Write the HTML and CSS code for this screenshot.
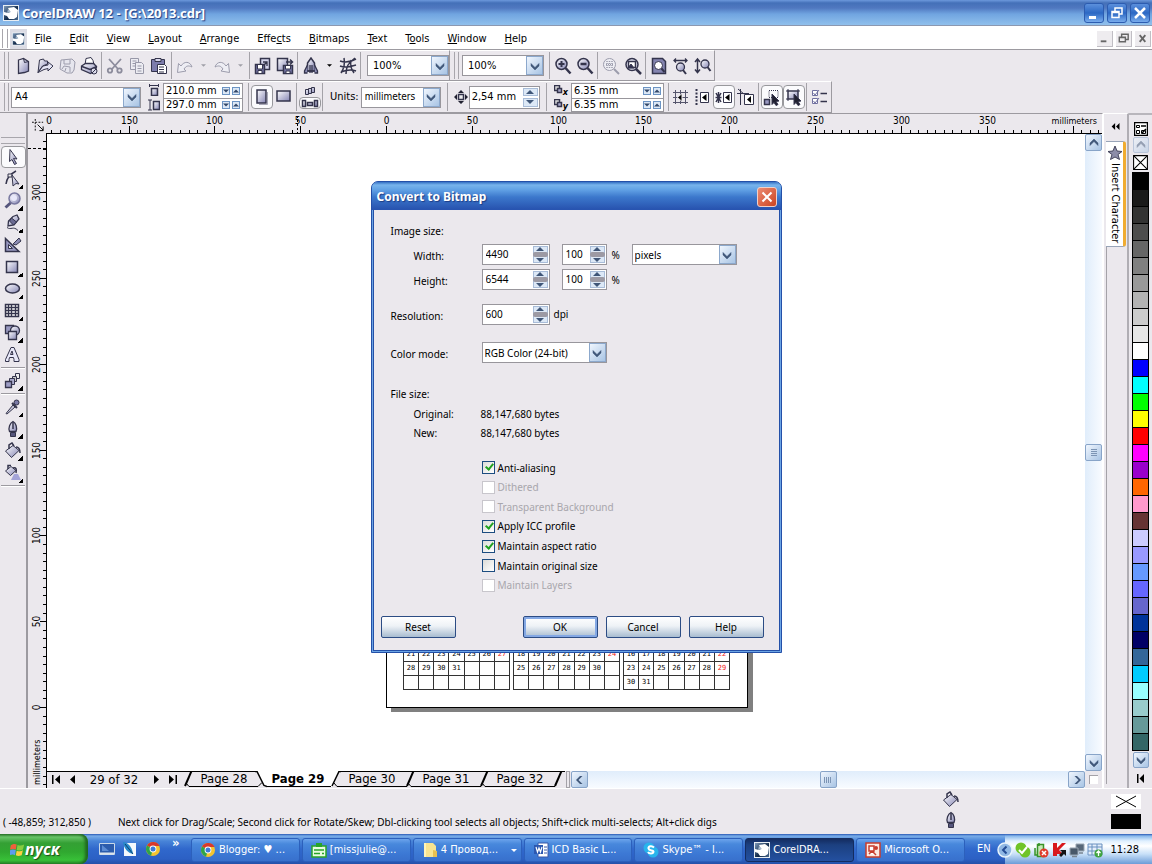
FILE: index.html
```
<!DOCTYPE html>
<html lang="en">
<head>
    <meta charset="UTF-8">
    <meta name="viewport" content="width=device-width, initial-scale=1.0">
    <title>CorelDRAW 12 - [G:\2013.cdr]</title>
    <link rel="stylesheet" href="styles.css">
</head>
<body>
    <!-- Icon sprite -->
    <svg class="sprite" aria-hidden="true">
        <defs>
            <linearGradient id="lav" x1="0" y1="0" x2="1" y2="1"><stop offset="0" stop-color="#fff"/><stop offset="1" stop-color="#8484b4"/></linearGradient>
            <linearGradient id="navy" x1="0" y1="0" x2="1" y2="1"><stop offset="0" stop-color="#7c98b8"/><stop offset="0.600" stop-color="#0c2444"/><stop offset="1" stop-color="#4c6c90"/></linearGradient>
        </defs>
        <symbol id="logo" viewBox="0 0 16 16"><path d="M0 0h16v16H0z" fill="#e8eef4"/><path d="M1 1h14v14H1z" fill="url(#navy)"/><path d="M5 3l6-1 4 3-1 7-3 2H6l-2-3-3-1V7l4 1 2-1z" fill="#fff"/><path d="M5 4l3 3-4 1z" fill="#a4b8cc"/></symbol>
        <symbol id="down" viewBox="0 0 10 10"><path d="M1 2.500l4 4 4-4v2.500L5 9 1 5z" fill="#3f5678" stroke="#3f5678" stroke-width=".5"/></symbol>
        <symbol id="up" viewBox="0 0 10 10"><path d="M1 7.500l4-4 4 4V5L5 1 1 5z" fill="#3f5678" stroke="#3f5678" stroke-width=".5"/></symbol>
        <symbol id="left" viewBox="0 0 10 10"><path d="M7.500 1l-4 4 4 4H5L1 5l4-4z" fill="#3f5678"/></symbol>
        <symbol id="right" viewBox="0 0 10 10"><path d="M2.500 1l4 4-4 4H5l4-4-4-4z" fill="#3f5678"/></symbol>
        <symbol id="tup" viewBox="0 0 8 4"><path d="M0 4l4-4 4 4z"/></symbol>
        <symbol id="tdown" viewBox="0 0 8 4"><path d="M0 0l4 4 4-4z"/></symbol>

        <symbol id="new" viewBox="0 0 18 18"><path d="M4.500 3l5-1.500 5 3V14l-4 1.500-6 1z" fill="url(#lav)" stroke-width="1.300"/><path d="M9.500 1.500l1 4 4-1" fill="none"/></symbol>
        <symbol id="open" viewBox="0 0 18 18"><path d="M2 15.500L3.500 3l4-1 1 2h3V7L6.500 9z" fill="url(#lav)"/><path d="M2 15.500L7 9l5-1V5l5 4-5 5v-2.500l-4 1z" fill="#e4e4f4"/></symbol>
        <symbol id="save" viewBox="0 0 18 18"><g stroke="#9c9cac"><path d="M3 3l11-1 3 3-1 8-2 3H9l-7-4z" fill="#e6e6ee"/><path d="M6 3v4h6V2.500M4 12l2-3 6 1v5M8 11l-1 3" fill="none"/></g></symbol>
        <symbol id="print" viewBox="0 0 18 18"><path d="M5 8l1-6.500 5-1 2 3 1 4" fill="#fff"/><path d="M1.500 9l4-2.500h8l3 3-1 4-5 3-9-4z" fill="url(#lav)" stroke-width="1.300"/><path d="M2 9.500l8 3 7-3" fill="none" stroke-width="1.500"/><circle cx="14" cy="14" r="3" fill="#dcdcec"/><path d="M12 16l4-4"/></symbol>
        <symbol id="cut" viewBox="0 0 18 18"><g fill="none" stroke="#8c8c9c" stroke-width="1.800"><path d="M3 2l9 10M15 2L6 12"/><circle cx="4" cy="13.500" r="2.200"/><circle cx="13.500" cy="13.500" r="2.200"/></g></symbol>
        <symbol id="copy" viewBox="0 0 18 18"><g stroke="#9898a8" fill="#ececf2"><path d="M2.500 1.500h8v11h-8zM4.500 4h4M4.500 6.500h3M4.500 9h3"/><path d="M7.500 5.500h6l2 2v9h-8zM9.500 9h4M9.500 11.500h4M9.500 14h4"/></g></symbol>
        <symbol id="paste" viewBox="0 0 18 18"><path d="M1.500 2.500h13v12h-13z" fill="#7c7cac"/><path d="M5 1.500h6v3H5z" fill="#d8d8ec"/><path d="M7.500 7.500h7l2 2v7h-9z" fill="#fff"/><path d="M9 10h5M9 12.500h5M9 15h5"/></symbol>
        <symbol id="undo" viewBox="0 0 18 18"><path d="M1.500 15.500l1-9L5 9c3-5 9-5 11 1-4-2-6-1-8 2l2 2z" fill="#eeeef4" stroke="#9c9cac"/></symbol>
        <symbol id="redo" viewBox="0 0 18 18"><path d="M16.500 15.500l-1-9L13 9C10 4 4 4 2 10c4-2 6-1 8 2l-2 2z" fill="#eeeef4" stroke="#9c9cac"/></symbol>
        <symbol id="import" viewBox="0 0 18 18"><path d="M6.500 1.500h9v11h-9z" fill="#d4d4ec" stroke-width="1.500"/><path d="M1.500 7.500h9v9h-9z" fill="#7474a4" stroke-width="1.500"/><path d="M3.500 8v4h5V8M4 16v-2.500h4V16" fill="#fff"/><path d="M9 5h4v4M13 5L9.500 8.500" fill="none" stroke-width="1.300"/></symbol>
        <symbol id="export" viewBox="0 0 18 18"><path d="M1.500 1.500h10v12h-10z" fill="url(#lav)" stroke-width="1.500"/><path d="M7.500 8.500h9v8h-9z" fill="#7474a4" stroke-width="1.500"/><path d="M9.500 9v3h5V9M10 16v-2h4v2" fill="#fff"/><path d="M10 5h6M14 2.500L16.500 5 14 7.500" fill="none" stroke-width="1.500"/></symbol>
        <symbol id="launch" viewBox="0 0 18 18"><path d="M5.500 14V6L9 1l3.500 5v8z" fill="url(#lav)" stroke-width="1.500"/><path d="M5.500 8L2.500 14v2h3M12.500 8l3 6v2h-3M8 8v8M10 8v8M5 14h8" fill="#8c8cb4" stroke-width="1.300"/></symbol>
        <symbol id="online" viewBox="0 0 18 18"><path d="M1 4c5 2 9 2 16-2M1 9c5 2 9 1 16-1M2 15c5-2 10-3 15-1M5 1c1 5 1 9-3 15M16 1C9 6 7 10 7 17M12 3c-1 5 0 9 3 13" fill="none" stroke-width="1.500"/></symbol>
        <symbol id="zoomin" viewBox="0 0 18 18"><circle cx="7.500" cy="7" r="5.500" fill="url(#lav)" stroke-width="1.500"/><path d="M11.500 11l5 5.500" stroke-width="2.500"/><path d="M4.500 7h6M7.500 4v6" stroke-width="2"/></symbol>
        <symbol id="zoomout" viewBox="0 0 18 18"><circle cx="7.500" cy="7" r="5.500" fill="url(#lav)" stroke-width="1.500"/><path d="M11.500 11l5 5.500" stroke-width="2.500"/><path d="M4.500 7h6" stroke-width="2.500"/></symbol>
        <symbol id="zoomsel" viewBox="0 0 18 18"><g stroke="#9c9cac"><circle cx="7.500" cy="7.500" r="6" fill="#eeeef4"/><path d="M12 12l5 5" stroke-width="2"/><path d="M5 4v7M7.500 4v7M10 4v7M4 7.500h7" stroke-dasharray="1 1" stroke-width="1.500"/></g></symbol>
        <symbol id="zoomall" viewBox="0 0 18 18"><circle cx="8" cy="7.500" r="6" fill="#e4e4f4" stroke-width="1.500"/><path d="M12 12l5 5" stroke-width="2.500"/><path d="M4.500 4.500h7v6h-7z" fill="#fff" stroke-width="1.500"/><path d="M4 11l3-4 3 4z" fill="#303050"/></symbol>
        <symbol id="zoompage" viewBox="0 0 18 18"><path d="M2.500 1.500h10l3 3v12h-13z" fill="#8484b0" stroke-width="1.500"/><circle cx="8.500" cy="8.500" r="4" fill="#fff"/><path d="M11.500 11.500l3 3.500" stroke-width="2"/></symbol>
        <symbol id="zoomw" viewBox="0 0 18 18"><path d="M2 3.500h13M4 1.500L2 3.500l2 2M13 1.500l2 2-2 2" fill="none" stroke-width="1.300"/><circle cx="8.500" cy="10" r="4" fill="url(#lav)" stroke-width="1.300"/><path d="M11 13l3 4" stroke-width="2"/></symbol>
        <symbol id="zoomh" viewBox="0 0 18 18"><path d="M3.500 2v13M1 5l2.500-3L6 5M1 12.500l2.500 3 2.500-3" fill="none" stroke-width="1.500"/><circle cx="11" cy="7" r="4" fill="url(#lav)" stroke-width="1.300"/><path d="M13.500 10l3 4" stroke-width="2"/></symbol>

        <symbol id="pw" viewBox="0 0 12 12"><path d="M3.500 4.500h6v7h-6z" fill="url(#lav)" stroke-width="1.500"/><path d="M1 1.500h10M1.500 0v3M10.500 0v3"/></symbol>
        <symbol id="ph" viewBox="0 0 12 12"><path d="M5.500 2.500h6v8h-6z" fill="url(#lav)" stroke-width="1.500"/><path d="M2 1v10M0 1h4M0 11h4"/></symbol>
        <symbol id="portrait" viewBox="0 0 18 18"><path d="M4 2h9v13H4z" fill="url(#lav)" stroke-width="1.500"/><path d="M14.500 4v12.500H6" fill="none" stroke="#a8a8b8"/></symbol>
        <symbol id="landscape" viewBox="0 0 18 18"><path d="M2 3h13v10H2z" fill="url(#lav)" stroke-width="1.500"/></symbol>
        <symbol id="pages" viewBox="0 0 14 10"><path d="M2.500 3.500h3v5h-3zM5.500 2.500h3v5h-3zM8.500 1.500h3v5h-3z" fill="url(#lav)"/></symbol>
        <symbol id="pages2" viewBox="0 0 18 10"><path d="M1.500 2.500h3v6h-3zM6.500 4.500h5v3h-5zM13.500 2.500h3v6h-3z" fill="url(#lav)" stroke-width="1.500"/></symbol>
        <symbol id="nudge" viewBox="0 0 14 14"><path d="M4.500 4.500h5v5h-5z" fill="#eee" stroke-width="1.500"/><path d="M7 0l3 3H4zM7 14l3-3H4zM0 7l3-3v6zM14 7l-3-3v6z" stroke="none" fill="#202030"/></symbol>
        <symbol id="dup" viewBox="0 0 9 9"><path d="M.5.5h5v5h-5z" fill="#ddd" stroke-width="1.500"/><path d="M3.500 3.500h4v4h-4z" fill="#aaaacc" stroke-width="1.500"/></symbol>
        <symbol id="sgrid" viewBox="0 0 18 18"><path d="M4.500 2v14M9.500 2v14M14.500 2v14M2 4.500h15M2 9.500h15M2 14.500h15" fill="none" stroke="#55556c"/><path d="M11 5.500v8l-4.500-4z" stroke="#ebe8ed" fill="#000"/></symbol>
        <symbol id="sguide" viewBox="0 0 18 18"><path d="M3.500 1v16" stroke-dasharray="2 1.500" stroke-width="2"/><path d="M7.500 4.500h8v10h-8z" fill="#fff"/><path d="M13.500 6v7L9 9.500z" stroke="none" fill="#000"/></symbol>
        <symbol id="sobj" viewBox="0 0 18 18"><path d="M1 5l5 9M6 5l-5 9M3.500 4v11M.5 9.500h6" stroke-width="1.500"/><path d="M8.500 4.500h8v10h-8z" fill="#fff"/><path d="M14.500 6v7L10 9.500z" stroke="none" fill="#000"/></symbol>
        <symbol id="sdyn" viewBox="0 0 18 18"><path d="M0 5.500h12M3.500 1v16M1 1l6 5" fill="none"/><path d="M7.500 6.500h9v10h-9z" fill="#fff"/><path d="M14 8v7l-4-3.500z" stroke="none" fill="#000"/></symbol>
        <symbol id="draw1" viewBox="0 0 18 18"><path d="M1.500 11.500h5v5h-5z" fill="#9898c0" stroke-width="1.500"/><path d="M6 2.500h9v7H6z" fill="none" stroke-dasharray="1 1"/><path d="M9 6l7 7-3 .5 2 3-2 1-2-3-2 2z" fill="#202030"/></symbol>
        <symbol id="draw2" viewBox="0 0 18 18"><path d="M3 3h10v8H3z" fill="url(#lav)" stroke-width="1.500"/><path d="M1 3h2M3 1v2M13 1v2M15 3h-2M1 11h2M3 13v-2"/><path d="M9 6l7 7-3 .5 2 3-2 1-2-3-2 2z" fill="#202030"/></symbol>
        <symbol id="opts" viewBox="0 0 18 18"><path d="M1.500 2.500h5v5h-5zM1.500 10.500h5v5h-5z" fill="#fff" stroke="#7070a0"/><path d="M2.500 5l1.500 2 4-5M2.500 13l1.500 2 4-5" fill="none" stroke="#7070a0"/><path d="M9.500 5.500H16M9.500 13.500H16" stroke-width="1.500"/></symbol>

        <symbol id="pick" viewBox="0 0 18 18"><path d="M6 1.500l7 9.500-3.500-.5 3 5-2 1-2.500-5-2.500 2z" fill="url(#lav)"/></symbol>
        <symbol id="shape" viewBox="0 0 18 18"><path d="M2 14C3 8 5 5 12 1" fill="none" stroke-width="1.500"/><path d="M4 4h4v3H4z" fill="#eee"/><path d="M8 5l7 9-3-.5-3 2.500z" fill="url(#lav)"/></symbol>
        <symbol id="zoom" viewBox="0 0 18 18"><circle cx="10.500" cy="6.500" r="5.500" fill="url(#lav)" stroke="#7878a0" stroke-width="1.500"/><circle cx="10" cy="6" r="3" fill="#e8e8fa" stroke="none"/><path d="M6.500 11l-5 4.500" stroke-width="3" stroke="#55557c"/></symbol>
        <symbol id="free" viewBox="0 0 18 18"><path d="M9 2.500l4-1.500 2 4-5 6-6 1 .5-5z" fill="url(#lav)" stroke-width="1.300"/><path d="M7.500 4l5 4-3 3-4-4z" fill="#6c6c94"/><path d="M3 13.500c4 3 6-2 11 3" fill="none"/></symbol>
        <symbol id="smart" viewBox="0 0 18 18"><path d="M1.500 2.500L15 15.500H1.500z" fill="#9898c0" stroke-width="1.500"/><path d="M4.500 8.500v4h4z" fill="#eee"/><path d="M9 8l6-6 2 3-5 4z" fill="#8c8cb4"/></symbol>
        <symbol id="rect" viewBox="0 0 18 18"><path d="M2.500 3.500h11v11h-11z" fill="url(#lav)" stroke-width="1.500"/></symbol>
        <symbol id="ellipse" viewBox="0 0 18 18"><ellipse cx="8.500" cy="8.500" rx="7" ry="4.500" fill="url(#lav)" stroke-width="1.500"/></symbol>
        <symbol id="graph" viewBox="0 0 18 18"><path d="M1.500 2.500h13v12h-13z" fill="#fff" stroke-width="1.500"/><path d="M4.500 2v12M7.500 2v12M11.500 2v12M1 5.500h13M1 8.500h13M1 11.500h13" stroke-width="1.300"/></symbol>
        <symbol id="basic" viewBox="0 0 18 18"><path d="M1.500 1.500h8v8h-8z" fill="#9898c0" stroke-width="1.300"/><circle cx="11" cy="6.500" r="4.500" fill="url(#lav)" stroke-width="1.300"/><path d="M4.500 7.500h8v8h-8z" fill="url(#lav)" stroke-width="1.300"/></symbol>
        <symbol id="text" viewBox="0 0 18 18"><path d="M1.500 15.500v-2L7 1.500h3l5 12v2h-5v-2l-.5-2h-4l-.5 2v2zM6.500 8.500h2.500L8 5z" fill="#e8e8f8"/></symbol>
        <symbol id="blend" viewBox="0 0 18 18"><path d="M11.500 1.500h4v5h-4z" fill="#eee"/><path d="M8.500 4.500h4v5h-4z" fill="#ccc"/><path d="M5.500 6.500h5v6h-5z" fill="#aaaacc"/><path d="M1.500 9.500h6v6h-6z" fill="#9c9cc4" stroke-width="1.300"/></symbol>
        <symbol id="dropper" viewBox="0 0 18 18"><path d="M2 15.500L9 7l2 2-8 7z" fill="#ccccdf"/><circle cx="12.500" cy="4.500" r="2.500" fill="#7c7ca8"/><path d="M8 5l5 5" stroke-width="2"/></symbol>
        <symbol id="nib" viewBox="0 0 18 18"><path d="M5.500 11.500C4 8 6 3 9 1.500c3 1.500 4.500 6.500 3 10z" fill="url(#lav)" stroke-width="1.300"/><path d="M6.500 12.500h5v4h-5z" fill="#55557c"/><path d="M9 2v7" stroke-width="1.500"/></symbol>
        <symbol id="bucket" viewBox="0 0 18 18"><path d="M1.500 9L9 3.500l6 5-7.500 7z" fill="url(#lav)"/><path d="M5 7V3l3-2 2 3M12 5c3 0 4 2 4 6" fill="none" stroke-width="1.500"/></symbol>
        <symbol id="ifill" viewBox="0 0 18 18"><path d="M1.500 7L7 2.500l5 4-5.500 5z" fill="url(#lav)"/><path d="M4 5V1.500h3M9 4c3-1 4 1 3 5" fill="none" stroke-width="1.500"/><path d="M10 10h4l3 6H7z" fill="#a4a4d8" stroke="none"/></symbol>

        <symbol id="chrome" viewBox="0 0 16 16"><circle cx="8" cy="8" r="7" fill="#f4c430"/><path d="M8 8L2 4.500A7 7 0 0 1 14.500 5H8z" fill="#d8382c"/><path d="M8 8l-2 6.700A7 7 0 0 1 2 4.500z" fill="#2ea44a"/><circle cx="8" cy="8" r="3.400" fill="#fff"/><circle cx="8" cy="8" r="2.500" fill="#3c7ad8"/></symbol>
        <symbol id="sheet" viewBox="0 0 16 16"><path d="M1 4h14v11H1z" fill="#e8fce0" stroke="#28a428" stroke-width="1.500"/><path d="M5 1h6v4H5z" fill="#28a428"/><path d="M3 8h10M3 11.500h6M11 11.500h2" stroke="#28a428" stroke-width="1.500"/></symbol>
        <symbol id="folder" viewBox="0 0 16 16"><path d="M2 1h9l3 3v11H2z" fill="#f8e490"/><path d="M11 8l4 1v6h-4z" fill="#e8c050"/><path d="M2 1h2v14H2z" fill="#fff4b8"/></symbol>
        <symbol id="word" viewBox="0 0 16 16"><path d="M5 1h10v14H5z" fill="#fff" stroke="#3858a8"/><path d="M1 3h9v9H1z" fill="#2c58b0"/><path d="M3 5l1.500 5L6 6l1.500 4L9 5" fill="none" stroke="#fff" stroke-width="1.200"/><path d="M11 5h3M11 8h3M11 11h3" stroke="#3858a8"/></symbol>
        <symbol id="skype" viewBox="0 0 16 16"><circle cx="6" cy="6" r="5.500" fill="#28b4ec"/><circle cx="10" cy="10" r="5.500" fill="#28b4ec"/><path d="M11 5.500C9 3.500 5 4 5.500 6.500S11 8 10.500 10 6 12 5 10" fill="none" stroke="#fff" stroke-width="2"/></symbol>
        <symbol id="ppt" viewBox="0 0 16 16"><path d="M1 1h14v14H1z" fill="#fbe8e0" stroke="#c83c2c" stroke-width="1.500"/><path d="M4 4h5v5H4zM4 12l3-3 4 4" fill="#fff" stroke="#c83c2c" stroke-width="1.500"/><circle cx="11" cy="6" r="2" fill="#c83c2c"/></symbol>
    </svg>

    <div class="desktop">
        <header class="titlebar">
            <svg class="i16"><use href="#logo"/></svg>
            <h1>CorelDRAW 12 - [G:\2013.cdr]</h1>
            <button class="win" aria-label="Minimize"><svg viewBox="0 0 18 18"><path d="M4 12h7v3H4z" fill="#fff"/></svg></button>
            <button class="win" aria-label="Restore"><svg viewBox="0 0 18 18"><path d="M7 7V4h7v6h-3M4 7.500h7v6H4zM4 8.500h7" fill="none" stroke="#fff" stroke-width="1.500"/></svg></button>
            <button class="win" aria-label="Close"><svg viewBox="0 0 18 18"><path d="M4 4l10 10M14 4L4 14" stroke="#fff" stroke-width="2.500"/></svg></button>
        </header>

        <nav class="menubar">
            <span class="grip"></span>
            <span class="doc-icon"><svg class="i16"><use href="#logo"/></svg></span>
            <button><u>F</u>ile</button>
            <button><u>E</u>dit</button>
            <button><u>V</u>iew</button>
            <button><u>L</u>ayout</button>
            <button><u>A</u>rrange</button>
            <button>Effe<u>c</u>ts</button>
            <button><u>B</u>itmaps</button>
            <button><u>T</u>ext</button>
            <button>T<u>o</u>ols</button>
            <button><u>W</u>indow</button>
            <button><u>H</u>elp</button>
            <div class="mdi">
                <button aria-label="Minimize document"><svg viewBox="0 0 16 16"><path d="M4 10h6v2H4z" fill="#666"/></svg></button>
                <button aria-label="Restore document"><svg viewBox="0 0 16 16"><path d="M6 6V3.500h7V9h-3M3.500 6.500H10v5H3.500zM3 7h7" fill="none" stroke="#666" stroke-width="1.500"/></svg></button>
                <button aria-label="Close document"><svg viewBox="0 0 16 16"><path d="M5 4.500l6 7M11 4.500l-6 7" stroke="#666" stroke-width="2"/></svg></button>
            </div>
        </nav>

        <div class="bars">
            <div class="bar">
                <span class="grip"></span>
                <button class="tool" aria-label="New"><svg><use href="#new"/></svg></button>
                <button class="tool" aria-label="Open"><svg><use href="#open"/></svg></button>
                <button class="tool" aria-label="Save"><svg><use href="#save"/></svg></button>
                <button class="tool" aria-label="Print"><svg><use href="#print"/></svg></button>
                <span class="sep"></span>
                <button class="tool" aria-label="Cut"><svg><use href="#cut"/></svg></button>
                <button class="tool" aria-label="Copy"><svg><use href="#copy"/></svg></button>
                <button class="tool" aria-label="Paste"><svg><use href="#paste"/></svg></button>
                <span class="sep"></span>
                <button class="tool" aria-label="Undo"><svg><use href="#undo"/></svg></button>
                <button class="caret dim" aria-label="Undo list"><svg><use href="#tdown"/></svg></button>
                <button class="tool" aria-label="Redo"><svg><use href="#redo"/></svg></button>
                <button class="caret dim" aria-label="Redo list"><svg><use href="#tdown"/></svg></button>
                <span class="sep"></span>
                <button class="tool" aria-label="Import"><svg><use href="#import"/></svg></button>
                <button class="tool" aria-label="Export"><svg><use href="#export"/></svg></button>
                <span class="sep"></span>
                <button class="tool" aria-label="Application launcher"><svg><use href="#launch"/></svg></button>
                <button class="caret" aria-label="Launcher list"><svg><use href="#tdown"/></svg></button>
                <button class="tool" aria-label="Corel online"><svg><use href="#online"/></svg></button>
                <span class="sep"></span>
                <span class="combo zoom-level"><select aria-label="Zoom levels"><option>100%</option></select><i><svg><use href="#down"/></svg></i></span>
            </div>
            <div class="bar">
                <span class="grip"></span>
                <span class="combo zoom-level"><select aria-label="Zoom"><option>100%</option></select><i><svg><use href="#down"/></svg></i></span>
                <span class="sep"></span>
                <button class="tool" aria-label="Zoom in"><svg><use href="#zoomin"/></svg></button>
                <button class="tool" aria-label="Zoom out"><svg><use href="#zoomout"/></svg></button>
                <span class="sep"></span>
                <button class="tool" aria-label="Zoom to selected"><svg><use href="#zoomsel"/></svg></button>
                <button class="tool" aria-label="Zoom to all objects"><svg><use href="#zoomall"/></svg></button>
                <span class="sep"></span>
                <button class="tool" aria-label="Zoom to page"><svg><use href="#zoompage"/></svg></button>
                <button class="tool" aria-label="Zoom to page width"><svg><use href="#zoomw"/></svg></button>
                <button class="tool" aria-label="Zoom to page height"><svg><use href="#zoomh"/></svg></button>
            </div>
        </div>

        <div class="bars props">
            <div class="bar">
                <span class="grip"></span>
                <span class="combo paper"><select aria-label="Paper type"><option>A4</option></select><i><svg><use href="#down"/></svg></i></span>
                <span class="pair size-icons"><svg><use href="#pw"/></svg><svg><use href="#ph"/></svg></span>
                <span class="pair size">
                    <label class="mini"><input type="text" value="210.0 mm" aria-label="Paper width"><button aria-label="Less"><svg><use href="#tdown"/></svg></button><button aria-label="More"><svg><use href="#tup"/></svg></button></label>
                    <label class="mini"><input type="text" value="297.0 mm" aria-label="Paper height"><button aria-label="Less"><svg><use href="#tdown"/></svg></button><button aria-label="More"><svg><use href="#tup"/></svg></button></label>
                </span>
                <span class="sep"></span>
                <button class="tool on" aria-label="Portrait"><svg><use href="#portrait"/></svg></button>
                <button class="tool" aria-label="Landscape"><svg><use href="#landscape"/></svg></button>
                <span class="sep"></span>
                <span class="pair stack">
                    <button aria-label="All pages"><svg><use href="#pages"/></svg></button>
                    <button class="on" aria-label="Current page"><svg><use href="#pages2"/></svg></button>
                </span>
                <span class="sep"></span>
                <label class="units" for="units">Units:</label>
                <span class="combo unit"><select id="units"><option>millimeters</option></select><i><svg><use href="#down"/></svg></i></span>
                <span class="sep wide"></span>
                <svg class="nudge"><use href="#nudge"/></svg>
                <span class="spin nudge-box"><input type="text" value="2,54 mm" aria-label="Nudge offset"><span class="arrows"><button aria-label="Up"><svg><use href="#tup"/></svg></button><button aria-label="Down"><svg><use href="#tdown"/></svg></button></span></span>
                <span class="sep wide"></span>
                <span class="pair dup"><span><svg><use href="#dup"/></svg><b>x</b></span><span><svg><use href="#dup"/></svg><b>y</b></span></span>
                <span class="pair dist">
                    <label class="mini"><input type="text" value="6.35 mm" aria-label="Duplicate x"><button aria-label="Less"><svg><use href="#tdown"/></svg></button><button aria-label="More"><svg><use href="#tup"/></svg></button></label>
                    <label class="mini"><input type="text" value="6.35 mm" aria-label="Duplicate y"><button aria-label="Less"><svg><use href="#tdown"/></svg></button><button aria-label="More"><svg><use href="#tup"/></svg></button></label>
                </span>
                <span class="sep tight"></span>
                <button class="tool" aria-label="Snap to grid"><svg><use href="#sgrid"/></svg></button>
                <button class="tool" aria-label="Snap to guidelines"><svg><use href="#sguide"/></svg></button>
                <button class="tool on" aria-label="Snap to objects"><svg><use href="#sobj"/></svg></button>
                <button class="tool" aria-label="Dynamic guides"><svg><use href="#sdyn"/></svg></button>
                <span class="sep"></span>
                <button class="tool on" aria-label="Draw complex objects"><svg><use href="#draw1"/></svg></button>
                <button class="tool on" aria-label="Treat as filled"><svg><use href="#draw2"/></svg></button>
                <span class="sep"></span>
                <button class="tool" aria-label="Options"><svg><use href="#opts"/></svg></button>
            </div>
        </div>

        <main class="work">
            <aside class="toolbox">
                <span class="grip flat"></span>
                <button class="on" aria-label="Pick"><svg><use href="#pick"/></svg></button>
                <button class="fly" aria-label="Shape"><svg><use href="#shape"/></svg></button>
                <button class="fly" aria-label="Zoom"><svg><use href="#zoom"/></svg></button>
                <button class="fly" aria-label="Freehand"><svg><use href="#free"/></svg></button>
                <button aria-label="Smart drawing"><svg><use href="#smart"/></svg></button>
                <button class="fly" aria-label="Rectangle"><svg><use href="#rect"/></svg></button>
                <button class="fly" aria-label="Ellipse"><svg><use href="#ellipse"/></svg></button>
                <button class="fly" aria-label="Graph paper"><svg><use href="#graph"/></svg></button>
                <button class="fly" aria-label="Basic shapes"><svg><use href="#basic"/></svg></button>
                <button aria-label="Text"><svg><use href="#text"/></svg></button>
                <hr>
                <button class="fly" aria-label="Interactive blend"><svg><use href="#blend"/></svg></button>
                <hr>
                <button class="fly" aria-label="Eyedropper"><svg><use href="#dropper"/></svg></button>
                <button class="fly" aria-label="Outline"><svg><use href="#nib"/></svg></button>
                <button class="fly" aria-label="Fill"><svg><use href="#bucket"/></svg></button>
                <button class="fly" aria-label="Interactive fill"><svg><use href="#ifill"/></svg></button>
                <hr>
            </aside>

            <section class="document">
                <div class="corner"><svg viewBox="0 0 14 14"><path d="M0 3.500h12M3.500 0v14" stroke="#000" stroke-dasharray="2 1.500"/><path d="M6 6l6 6M12 8v4.500H8" stroke="#000" fill="none"/></svg></div>
                <svg class="ruler-h" id="ruler-h"></svg>
                <svg class="ruler-v" id="ruler-v"></svg>
                <div class="canvas">
                    <div class="page" id="page"></div>
                </div>
                <div class="vscroll">
                    <button aria-label="Scroll up"><svg><use href="#up"/></svg></button>
                    <button class="thumb" aria-label="Scroll thumb"><svg viewBox="0 0 10 10"><path d="M2 1.500h6M2 3.500h6M2 5.500h6M2 7.500h6" stroke="#7c94b4"/></svg></button>
                    <button aria-label="Scroll down"><svg><use href="#down"/></svg></button>
                </div>
                <div class="pages">
                    <button class="nav" aria-label="First page"><svg viewBox="0 0 8 9"><path d="M0 0h1.500v9H0zM8 0v9L3 4.500z"/></svg></button>
                    <button class="nav" aria-label="Previous page"><svg viewBox="0 0 8 9"><path d="M6 0v9L1 4.500z"/></svg></button>
                    <span class="count">29 of 32</span>
                    <button class="nav" aria-label="Next page"><svg viewBox="0 0 8 9"><path d="M2 0v9l5-4.500z"/></svg></button>
                    <button class="nav" aria-label="Last page"><svg viewBox="0 0 8 9"><path d="M0 0v9l5-4.500zM6.500 0H8v9H6.500z"/></svg></button>
                    <svg class="slant" viewBox="0 0 12 17"><path d="M10.500 0L4 15" stroke="#000" stroke-width="2"/><path d="M5 12l3 3.500h4" fill="none" stroke="#000"/></svg>
                    <button class="tab">Page 28</button>
                    <svg class="slant" viewBox="0 0 12 17"><path d="M2 0h10v16h-3z" fill="#fff"/><path d="M0 .5h2l7 14 3 1" fill="none" stroke="#000" stroke-width="1.500"/><path d="M0 15.500h3l4-4" fill="none" stroke="#000"/></svg>
                    <button class="tab active">Page 29</button>
                    <svg class="slant" viewBox="0 0 12 17"><path d="M0 0h10L3 16H0z" fill="#fff"/><path d="M12 .5h-2L3 15" fill="none" stroke="#000" stroke-width="1.500"/><path d="M0 15.500h2M5 12l3 3.500h4" fill="none" stroke="#000"/></svg>
                    <button class="tab">Page 30</button>
                    <svg class="slant" viewBox="0 0 12 17"><path d="M10.500 0L4 15" stroke="#000" stroke-width="2"/><path d="M0 15.500h4M5 12l3 3.500h4" fill="none" stroke="#000"/></svg>
                    <button class="tab">Page 31</button>
                    <svg class="slant" viewBox="0 0 12 17"><path d="M10.500 0L4 15" stroke="#000" stroke-width="2"/><path d="M0 15.500h4M5 12l3 3.500h4" fill="none" stroke="#000"/></svg>
                    <button class="tab">Page 32</button>
                    <svg class="slant" viewBox="0 0 12 17"><path d="M10.500 0L4 15" stroke="#000" stroke-width="2"/><path d="M0 15.500h4" stroke="#000"/></svg>
                    <span class="splitter"></span>
                    <div class="hscroll">
                        <button aria-label="Scroll left"><svg><use href="#left"/></svg></button>
                        <button class="thumb" aria-label="Scroll thumb"><svg viewBox="0 0 10 10"><path d="M1.500 2v6M3.500 2v6M5.500 2v6M7.500 2v6" stroke="#7c94b4"/></svg></button>
                        <button aria-label="Scroll right"><svg><use href="#right"/></svg></button>
                    </div>
                    <span class="navigator"></span>
                </div>
            </section>

            <aside class="docker">
                <button class="collapse" aria-label="Collapse docker"><svg viewBox="0 0 10 8"><path d="M4 0v8L0 4zM9 0v8L5 4z"/></svg></button>
                <button class="docker-tab">
                    <svg viewBox="0 0 16 16"><path d="M8 1l2 5 5 .5-4 3 1.500 5L8 12l-4.500 2.500L5 9.500l-4-3L6 6z" fill="#8c8ca8" stroke="#44445c"/></svg>
                    <span>Insert Character</span>
                </button>
                <div class="docker-body"></div>
            </aside>

            <aside class="palette">
                <button class="menu" aria-label="Palette menu"><svg viewBox="0 0 14 14"><path d="M.5.5h13v13H.5z" fill="#fff" stroke="#000" stroke-width="1.500"/><path d="M2.500 3.500h3v2h-3zM2.500 8.500h3v3h-3zM7.500 8.500h4v3h-4z" fill="none" stroke="#000"/><path d="M7 4h5M8 11l4-4" stroke="#000" stroke-width="1.500"/></svg></button>
                <button class="step off" aria-label="Previous colors"><svg><use href="#up"/></svg></button>
                <button class="none" aria-label="No color"><svg viewBox="0 0 16 16"><path d="M1.500 1.500h13v13h-13z" fill="#fff" stroke="#000"/><path d="M2 2l12 12M14 2L2 14" stroke="#000"/></svg></button>
                <div class="swatches" id="swatches"></div>
                <button class="step" aria-label="Next colors"><svg><use href="#down"/></svg></button>
                <button class="expand" aria-label="Expand palette"><svg viewBox="0 0 8 9"><path d="M0 0h1.500v9H0zM7 0v9L2.500 4.500z"/></svg></button>
            </aside>
        </main>

        <footer class="status">
            <span class="coords">( -48,859; 312,850 )</span>
            <span class="hint">Next click for Drag/Scale; Second click for Rotate/Skew; Dbl-clicking tool selects all objects; Shift+click multi-selects; Alt+click digs</span>
            <span class="state">
                <svg><use href="#bucket"/></svg>
                <svg><use href="#nib"/></svg>
            </span>
            <span class="fills">
                <svg viewBox="0 0 30 15"><path d="M0 0h30v15H0z" fill="#fff"/><path d="M5 2l20 11M25 2L5 13" stroke="#000"/></svg>
                <svg viewBox="0 0 30 15"><path d="M0 0h30v15H0z"/></svg>
            </span>
        </footer>

        <form class="dialog">
            <div class="dialog-title">
                <h2>Convert to Bitmap</h2>
                <button type="button" aria-label="Close"><svg viewBox="0 0 18 18"><path d="M4.500 4.500l9 9M13.500 4.500l-9 9" stroke="#fff" stroke-width="2"/></svg></button>
            </div>
            <div class="dialog-body">
                <p class="group">Image size:</p>
                <div class="field">
                    <label class="sub" for="width">Width:</label>
                    <span class="spin"><input type="text" id="width" value="4490"><span class="arrows"><button type="button" aria-label="Up"><svg><use href="#tup"/></svg></button><button type="button" aria-label="Down"><svg><use href="#tdown"/></svg></button></span></span>
                    <span class="spin pct"><input type="text" id="wpct" value="100"><span class="arrows"><button type="button" aria-label="Up"><svg><use href="#tup"/></svg></button><button type="button" aria-label="Down"><svg><use href="#tdown"/></svg></button></span></span>
                    <label class="unit-label" for="wpct">%</label>
                    <span class="combo px"><select aria-label="Size units"><option>pixels</option></select><i><svg><use href="#down"/></svg></i></span>
                </div>
                <div class="field">
                    <label class="sub" for="height">Height:</label>
                    <span class="spin"><input type="text" id="height" value="6544"><span class="arrows"><button type="button" aria-label="Up"><svg><use href="#tup"/></svg></button><button type="button" aria-label="Down"><svg><use href="#tdown"/></svg></button></span></span>
                    <span class="spin pct"><input type="text" id="hpct" value="100"><span class="arrows"><button type="button" aria-label="Up"><svg><use href="#tup"/></svg></button><button type="button" aria-label="Down"><svg><use href="#tdown"/></svg></button></span></span>
                    <label class="unit-label" for="hpct">%</label>
                </div>
                <div class="field resolution">
                    <label for="dpi">Resolution:</label>
                    <span class="spin"><input type="text" id="dpi" value="600"><span class="arrows"><button type="button" aria-label="Up"><svg><use href="#tup"/></svg></button><button type="button" aria-label="Down"><svg><use href="#tdown"/></svg></button></span></span>
                    <span class="dpi">dpi</span>
                </div>
                <div class="field mode">
                    <label for="mode">Color mode:</label>
                    <span class="combo rgb"><select id="mode"><option>RGB Color (24-bit)</option></select><i><svg><use href="#down"/></svg></i></span>
                </div>
                <p class="group">File size:</p>
                <dl>
                    <dt>Original:</dt><dd>88,147,680 bytes</dd>
                    <dt>New:</dt><dd>88,147,680 bytes</dd>
                </dl>
                <div class="checks">
                    <label><input type="checkbox" checked>Anti-aliasing</label>
                    <label class="off"><input type="checkbox" disabled>Dithered</label>
                    <label class="off"><input type="checkbox" disabled>Transparent Background</label>
                    <label><input type="checkbox" checked>Apply ICC profile</label>
                    <label><input type="checkbox" checked>Maintain aspect ratio</label>
                    <label><input type="checkbox">Maintain original size</label>
                    <label class="off"><input type="checkbox" disabled>Maintain Layers</label>
                </div>
                <div class="actions">
                    <button type="reset">Reset</button>
                    <button type="button" class="default">OK</button>
                    <button type="button">Cancel</button>
                    <button type="button">Help</button>
                </div>
            </div>
        </form>
    </div>

    <div class="taskbar">
        <button class="start"><svg viewBox="0 0 18 18"><path d="M1 4c3-2 5-2 7-1L7 9C5 8 3 8 0 9z" fill="#f0603c"/><path d="M9 3.500c3 1 5 1 8-.5l-1.500 6c-3 1.500-5 1.500-7.500.5z" fill="#88cc40"/><path d="M0 10c3-1.500 5-1 7 0l-1 6c-2-1.500-4-1-7 0z" fill="#5c9cf0"/><path d="M8 10.500c3 1 5 1 7.500-.5L14 16c-3 1-5 1-7 0z" fill="#fcd040"/></svg>пуск</button>
        <div class="quick">
            <button aria-label="Show desktop"><svg viewBox="0 0 16 16"><path d="M.5 2.500h15v11H.5z" fill="#2c5cac" stroke="#c8d8e8"/><path d="M1 11.500h14v2H1z" fill="#dce4ec"/><path d="M3 4l7 6H3z" fill="#5c8cd4"/></svg></button>
            <button aria-label="Editor"><svg viewBox="0 0 16 16"><path d="M2 2h12v13H2z" fill="#f4f8fc"/><path d="M1 1c4 0 9 4 10 12C6 12 2 8 1 1z" fill="#2888c8"/><path d="M3 3l8 10" stroke="#0c4474"/></svg></button>
            <button aria-label="Chrome"><svg><use href="#chrome"/></svg></button>
            <span>»</span>
        </div>
        <div class="tasks">
            <button><svg><use href="#chrome"/></svg><span>Blogger: ♥ ...</span></button>
            <button><svg><use href="#sheet"/></svg><span>[missjulie@...</span></button>
            <button><svg><use href="#folder"/></svg><span>4 Провод...</span><svg class="more"><use href="#tdown"/></svg></button>
            <button><svg><use href="#word"/></svg><span>ICD Basic L...</span></button>
            <button><svg><use href="#skype"/></svg><span>Skype™ - l...</span></button>
            <button class="current"><svg><use href="#logo"/></svg><span>CorelDRA...</span></button>
            <button><svg><use href="#ppt"/></svg><span>Microsoft O...</span></button>
        </div>
        <span class="lang">EN</span>
        <div class="tray">
            <button aria-label="Show hidden icons"><svg viewBox="0 0 16 16"><circle cx="8" cy="8" r="7" fill="#90b8e4" stroke="#e8f4fc" stroke-width="1.500"/><path d="M9.500 4.500L6 8l3.500 3.500" fill="none" stroke="#244c94" stroke-width="2"/></svg></button>
            <svg viewBox="0 0 16 16"><circle cx="6" cy="6" r="5.500" fill="#70c428"/><circle cx="10" cy="10" r="5.500" fill="#70c428"/><path d="M4 8l3 3 5-6" fill="none" stroke="#fff" stroke-width="2"/></svg>
            <svg viewBox="0 0 16 16"><path d="M4.500 2.500h6v12h-6zM6 1v3M2 6v7h3" fill="#c8e8b8" stroke="#389428" stroke-width="1.500"/><circle cx="11" cy="11" r="4.500" fill="#e03c2c"/><path d="M9 9l4 4M13 9l-4 4" stroke="#fff" stroke-width="1.500"/></svg>
            <svg viewBox="0 0 16 16"><path d="M2 1h4v5l5-5h4L8 8l4 4H6V9v5H2z" fill="#d8181c"/><path d="M9 8h6v6l-2-2-3 3-2-2 3-3z" fill="#141414"/></svg>
            <svg viewBox="0 0 16 16"><path d="M7 2h8v7H7z" fill="#586878" stroke="#98a4b0"/><path d="M1 6h8v7H1z" fill="#485868" stroke="#98a4b0"/><path d="M3 14.500h5M10 11h4" stroke="#788490" stroke-width="1.500"/></svg>
            <svg viewBox="0 0 16 16"><path d="M1 2h14v11H1z" fill="#e4eefa" stroke="#6890c0"/><path d="M1 5h14M5 2v11M10 2v11M1 9h14" stroke="#6890c0"/><circle cx="11.500" cy="11.500" r="4" fill="#40a440"/><path d="M11.500 14V9.500M9.500 11l2-2 2 2" fill="none" stroke="#fff" stroke-width="1.300"/></svg>
            <time>11:28</time>
        </div>
    </div>

    <script src="script.js"></script>
</body>
</html>
```

FILE: styles.css
```
:root {
    --face: #ebe8ed;
    --edge: #9c9aa0;
    --ui: "DejaVu Sans Condensed", "DejaVu Sans", sans-serif;
    --dlg: "Noto Sans", "Open Sans", sans-serif;
    --title: "Noto Sans", "Open Sans", sans-serif;
}

* {
    box-sizing: border-box;
}

body {
    margin: 0;
    height: 100vh;
    display: flex;
    flex-direction: column;
    overflow: hidden;
    font: 10px/14px var(--ui);
    color: #000;
    background: var(--face);
}

button, input, select {
    font: inherit;
    color: inherit;
    margin: 0;
    padding: 0;
    border: 0;
    border-radius: 0;
    background: none;
}

h1, h2, p, dl, dd {
    margin: 0;
    font-weight: normal;
}

svg {
    display: block;
    flex: none;
}

.sprite {
    position: absolute;
    width: 0;
    height: 0;
}

.i16 {
    width: 16px;
    height: 16px;
}

.desktop {
    flex: 1;
    min-height: 0;
    position: relative;
    display: flex;
    flex-direction: column;
}

/* Title bar */
.titlebar {
    flex: none;
    height: 26px;
    display: flex;
    align-items: center;
    gap: 3px;
    padding: 0 2px 0 3px;
    background: linear-gradient(#6c98dc 0, #4470b8 3px, #5078c0 8px, #70a4e0 14px, #90c0ec 25px);
    border-bottom: 1px solid #8c98b0;
}

.titlebar h1 {
    flex: 1;
    font: bold 13px/18px var(--title);
    color: #fff;
    text-shadow: 1px 1px 1px #1c3c84;
}

.win {
    width: 20px;
    height: 20px;
    border: 1px solid #2c5cb0;
    border-radius: 3px;
    background: linear-gradient(#5c90dc, #2c68c4 50%, #78acec);
}

/* Menu bar */
.menubar {
    flex: none;
    height: 24px;
    display: flex;
    align-items: center;
    padding-top: 2px;
    background: #fff;
    border-bottom: 1px solid var(--edge);
}

.menubar > button {
    padding: 0 9px;
    font-size: 11px;
}

.grip {
    align-self: stretch;
    width: 6px;
    margin: 1px 2px;
    border-left: 1px solid #a8a6ac;
    border-right: 1px solid #a8a6ac;
}

.doc-icon {
    padding: 2px;
    margin-right: -1px;
    background: #dcdce4;
}

.doc-icon svg {
    width: 13px;
    height: 16px;
}

.mdi {
    margin-left: auto;
    display: flex;
    gap: 3px;
    padding-right: 1px;
}

.mdi button {
    width: 16px;
    height: 16px;
    background: #eeecef;
    border-right: 1px solid #c0bec4;
    border-bottom: 1px solid #c0bec4;
}

/* Toolbars */
.bars {
    flex: none;
    display: flex;
    height: 31px;
    background: var(--face);
}

.bars.props {
    height: 32px;
}

.bar {
    display: flex;
    align-items: center;
    border-right: 1px solid var(--edge);
    border-bottom: 1px solid var(--edge);
    border-top: 1px solid #fff;
}

.bar .grip {
    margin: 1px 3px 1px 4px;
    width: 5px;
}

.props .grip {
    margin-right: 2px;
}

.tool {
    width: 22px;
    height: 24px;
    display: flex;
    align-items: center;
    justify-content: center;
}

.tool svg, .toolbox svg, .state svg {
    width: 18px;
    height: 18px;
    stroke: #34344c;
    fill: none;
}

.on {
    background: #fbfbfd;
    border: 1px solid #98989c;
    border-radius: 4px;
}

.sep {
    align-self: stretch;
    width: 1px;
    margin: 1px 2px 1px 1px;
    background: #a4a2a8;
}

.sep.wide {
    margin: 1px 6px;
}

.sep.tight {
    margin: 1px 0 1px 4px;
}

.caret {
    width: 15px;
    height: 20px;
    display: flex;
    align-items: center;
    justify-content: center;
}

.caret svg {
    width: 5px;
    height: 3px;
}

.caret.dim {
    fill: #a0a0a8;
}

.combo {
    position: relative;
    display: flex;
    height: 21px;
}

.combo select {
    flex: 1;
    min-width: 0;
    appearance: none;
    padding: 0 3px;
    border: 1px solid #98969c;
    background: #fff;
    font-size: 11px;
}

.combo i {
    position: absolute;
    top: 1px;
    right: 1px;
    bottom: 1px;
    width: 17px;
    display: flex;
    align-items: center;
    justify-content: center;
    pointer-events: none;
    border: 1px solid #8ca8cc;
    background: linear-gradient(135deg, #f0f6fe, #a8c4e4);
}

.combo i svg {
    width: 10px;
    height: 10px;
}

.zoom-level {
    width: 82px;
    margin-left: 4px;
}

.bar:nth-child(2) .zoom-level {
    margin: 0 4px 0 0;
}

.zoom-level select {
    padding-left: 5px;
}

/* Property bar */
.paper {
    width: 130px;
}

.pair {
    display: flex;
    flex-direction: column;
    justify-content: center;
}

.size-icons {
    gap: 3px;
    margin: 0 3px 0 7px;
}

.size-icons svg {
    width: 12px;
    height: 12px;
    stroke: #34344c;
}

.size, .dist {
    width: 80px;
    border: 1px solid #98969c;
    background: #fff;
    margin-right: 4px;
}

.dist {
    width: 93px;
    margin: 0;
}

.mini {
    display: flex;
    align-items: center;
    gap: 2px;
    height: 14px;
    padding: 0 2px;
}

.mini + .mini {
    height: 13px;
    border-top: 1px solid #98969c;
}

.mini input {
    flex: 1;
    min-width: 0;
    height: 12px;
    font-size: 11px;
}

.mini button {
    width: 8px;
    height: 8px;
    border: 1px solid #6c94c4;
    background: #dce8f6;
}

.mini button svg {
    width: 6px;
    height: 4px;
    fill: #33486a;
}

.stack {
    width: 22px;
    align-items: center;
}

.stack button {
    width: 22px;
    height: 12px;
    display: flex;
    align-items: center;
    justify-content: center;
}

.stack svg {
    width: 14px;
    height: 10px;
    stroke: #34344c;
}

.stack .on svg {
    width: 18px;
}

.units {
    margin: 0 2px 0 5px;
    font-size: 11px;
}

.unit {
    width: 80px;
}

.unit select {
    font-size: 10px;
}

.nudge {
    width: 14px;
    height: 14px;
    stroke: #34344c;
    margin-right: 1px;
}

.spin {
    display: flex;
    width: 68px;
    height: 21px;
    border: 1px solid #98969c;
    background: #fff;
}

.spin input {
    flex: 1;
    min-width: 0;
    padding: 0 3px 2px;
    font-size: 11px;
}

.arrows {
    width: 16px;
    display: flex;
    flex-direction: column;
    padding: 1px 1px 1px 0;
    position: relative;
}

.arrows button {
    flex: 1;
    display: flex;
    align-items: center;
    justify-content: center;
    border: 1px solid #a8bcd8;
    background: #dce8f6;
}

.arrows svg {
    width: 8px;
    height: 4px;
    fill: #3f5678;
}

.nudge-box {
    width: 71px;
    height: 23px;
}

.nudge-box input {
    padding: 0 1px 1px 2px;
}

.nudge-box .arrows {
    gap: 2px;
}

.dup {
    gap: 3px;
    margin: 0 3px 0 1px;
}

.dup span {
    display: flex;
    align-items: end;
    height: 11px;
}

.dup svg {
    width: 9px;
    height: 9px;
    stroke: #34344c;
    align-self: start;
}

.dup b {
    font: italic bold 9px/8px var(--ui);
}

/* Work area */
.work {
    flex: 1;
    min-height: 0;
    display: flex;
    border-bottom: 1px solid #fff;
}

.toolbox {
    width: 28px;
    padding: 23px 1px 0;
    border-right: 2px solid var(--edge);
    display: flex;
    flex-direction: column;
}

.grip.flat {
    align-self: auto;
    flex: none;
    width: auto;
    height: 7px;
    margin: 1px 0 2px;
    border: solid #a8a6ac;
    border-width: 1px 0;
}

.toolbox button {
    flex: none;
    width: 25px;
    height: 22px;
    display: flex;
    align-items: center;
    padding: 0 3px;
}

.toolbox .on {
    padding: 0 2px;
}

/* Flyout marker in the lower right corner */
.toolbox .fly {
    background: linear-gradient(135deg, transparent 50%, #000 50%) right 3px bottom 1px / 5px 5px no-repeat;
}

.toolbox hr {
    width: 100%;
    margin: 1px 0;
    border: 0;
    border-top: 1px solid var(--edge);
    border-bottom: 1px solid #fff;
}

.document {
    flex: 1;
    min-width: 0;
    display: grid;
    grid-template: 20px 1fr 17px / 18px 1fr 17px;
    border-top: 1px solid var(--edge);
    border-right: 1px solid #fff;
}

.corner {
    padding: 5px 0 0 4px;
}

.corner svg {
    width: 13px;
    height: 13px;
}

.ruler-h {
    grid-column: 2 / 4;
    width: 100%;
    height: 20px;
}

.ruler-v {
    grid-row: 2 / 4;
    width: 18px;
    height: 100%;
}

.ruler-h text, .ruler-v text {
    font: 10px var(--ui);
    text-anchor: middle;
}

.ruler-h text.unit-name {
    font-size: 9px;
    text-anchor: end;
}

.ruler-v text.unit-name {
    font-size: 9px;
    text-anchor: start;
}

.canvas {
    position: relative;
    overflow: hidden;
    background: #fff;
    border-left: 1px solid #000;
}

.page {
    position: absolute;
    left: 339px;
    top: 64px;
    width: 362px;
    height: 510px;
    padding: 0 17px 17px 16px;
    display: flex;
    align-items: end;
    justify-content: space-between;
    background: #fff;
    border: 1px solid #000;
    box-shadow: 5px 4px 0 #808080;
}

.page table {
    border-collapse: collapse;
    table-layout: fixed;
    width: 107px;
    font: 7px/8px "DejaVu Sans Mono", monospace;
}

.page td {
    height: 14px;
    padding: 0 0 2px;
    border: 1px solid #333;
    text-align: center;
}

.page td:last-child {
    color: #f01818;
}

.vscroll, .hscroll {
    display: flex;
    justify-content: space-between;
    background: linear-gradient(90deg, #e0edfb, #f8fbff);
}

.vscroll {
    flex-direction: column;
}

.hscroll {
    flex: 1;
    background: linear-gradient(#e0edfb, #f8fbff);
}

.vscroll button, .hscroll button, .step {
    width: 17px;
    height: 17px;
    display: flex;
    align-items: center;
    justify-content: center;
    border: 1px solid #88a4c8;
    border-radius: 2px;
    background: linear-gradient(135deg, #f0f6fe, #a8c4e4);
}

.vscroll svg, .hscroll svg, .step svg {
    width: 10px;
    height: 10px;
}

/* Page tabs */
.pages {
    grid-column: 2 / 4;
    display: flex;
    border-left: 1px solid #000;
    font-size: 13px;
    line-height: 14px;
    background: linear-gradient(#000, #000) 0 0 / 518px 1px no-repeat var(--face);
}

.nav {
    width: 17px;
    display: flex;
    align-items: center;
    justify-content: center;
}

.nav svg {
    width: 8px;
    height: 9px;
}

.count {
    width: 66px;
    padding-top: 2px;
    text-align: center;
}

.slant {
    width: 12px;
    height: 17px;
}

.tab {
    width: 62px;
    padding-bottom: 1px;
    border-top: 1px solid #000;
    border-bottom: 1px solid #000;
    margin-bottom: 1px;
}

.tab.active {
    font-weight: bold;
    background: #fff;
    border-top-color: #fff;
}

.splitter {
    width: 4px;
    margin: 0 1px 0 3px;
    border: 1px solid #a4a2a8;
}

.navigator {
    width: 17px;
    border: 4px solid var(--face);
    background: #fff;
    box-shadow: inset 1px 1px #a4a2a8;
}

/* Docker */
.docker {
    width: 26px;
    display: flex;
    flex-direction: column;
    padding: 0 1px 4px 2px;
    border-top: 1px solid #fff;
    border-right: 2px solid #b0aeb4;
    border-left: 1px solid #fff;
}

.collapse {
    height: 27px;
    padding: 0 5px 3px;
}

.collapse svg {
    width: 10px;
    height: 7px;
}

.docker-tab {
    height: 106px;
    display: flex;
    flex-direction: column;
    align-items: center;
    gap: 2px;
    padding: 3px 0;
    background: #fff;
    border: 1px solid #98a4b8;
    border-left: 0;
    border-right: 3px solid #f0ac30;
    border-radius: 0 3px 3px 0;
}

.docker-tab svg {
    width: 16px;
    height: 16px;
}

.docker-tab span {
    writing-mode: vertical-rl;
    white-space: nowrap;
    font-size: 11px;
}

.docker-body {
    flex: 1;
    border-left: 1px solid #a4a2a8;
}

/* Palette */
.palette {
    width: 23px;
    display: flex;
    flex-direction: column;
    align-items: center;
    padding-top: 7px;
    border-top: 2px solid #b8b6bc;
}

.palette .menu svg {
    width: 14px;
    height: 14px;
}

.step {
    width: 16px;
    height: 16px;
    margin: 1px 0;
}

.step.off {
    opacity: .5;
}

.none svg {
    width: 17px;
    height: 17px;
}

.swatches {
    width: 17px;
    margin-top: 1px;
    border: 1px solid #000;
    border-bottom: 0;
}

.swatches button {
    display: block;
    width: 15px;
    height: 17px;
    border-bottom: 1px solid #000;
}

.expand {
    padding: 5px;
}

.expand svg {
    width: 8px;
    height: 9px;
}

/* Status bar */
.status {
    flex: none;
    height: 45px;
    display: flex;
    align-items: end;
    padding: 5px 11px 5px 3px;
    font-family: var(--dlg);
}

.coords {
    width: 115px;
}

.hint {
    flex: 1;
    white-space: nowrap;
}

.state, .fills {
    display: flex;
    flex-direction: column;
    gap: 5px;
}

.state {
    gap: 2px;
    margin-right: 151px;
}

.fills svg {
    width: 30px;
    height: 15px;
}

/* Convert to Bitmap */
.dialog {
    position: absolute;
    inset: 0;
    margin: auto;
    width: 411px;
    height: fit-content;
    display: flex;
    flex-direction: column;
    border: 1px solid #2450a8;
    border-radius: 7px 7px 0 0;
    background: #6ca4e4;
    overflow: hidden;
    font-family: var(--dlg);
}

.dialog-title {
    height: 28px;
    display: flex;
    align-items: center;
    justify-content: space-between;
    padding: 1px 4px 0 5px;
    background: linear-gradient(#3470c4 0, #78b4ec 3px, #60a0e4 8px, #3c78cc 15px, #2854b0 27px);
}

.dialog-title h2 {
    font: bold 12px/18px var(--title);
    color: #fff;
    text-shadow: 1px 1px 1px #1c3c84;
}

.dialog-title button {
    width: 20px;
    height: 20px;
    border: 1px solid #f0d0c8;
    border-radius: 3px;
    background: linear-gradient(135deg, #ec8c74, #cc4420);
}

.dialog-body {
    margin: 0 1px 1px;
    padding: 13px 15px 12px 17px;
    border: 1px solid #2450a8;
    border-top: 0;
    background: var(--face);
}

.group {
    line-height: 16px;
}

.field {
    display: flex;
    align-items: center;
    height: 25px;
}

.field > label:first-child {
    width: 91px;
    padding-top: 2px;
}

.field > label.sub {
    padding-left: 23px;
}

.group + .field {
    margin-top: 3px;
}

.pct {
    width: 45px;
    margin-left: 12px;
}

.field .unit-label {
    width: 25px;
    padding-left: 5px;
}

/* The two spin halves meet under a grey divider */
.dialog .arrows::after {
    content: "";
    position: absolute;
    left: 0;
    right: 1px;
    top: 7px;
    height: 5px;
    background: #9c9aa4;
    border-radius: 2px;
}

.dialog .arrows button {
    padding: 0;
}

.dialog .arrows button:first-child {
    align-items: start;
}

.dialog .arrows button:last-child {
    align-items: end;
}

.dialog .combo select {
    font-size: 10px;
    padding: 0 2px;
}

.dialog .spin input {
    font-size: 10px;
}

.px {
    width: 105px;
}

.rgb {
    width: 125px;
}

.resolution {
    margin-top: 10px;
}

.dpi {
    padding: 0 4px 2px;
}

.mode {
    margin: 13px 0 21px;
}

dl {
    display: grid;
    grid-template-columns: 67px 1fr;
    padding: 3px 0 0 23px;
    line-height: 19px;
}

.checks {
    display: grid;
    grid-auto-rows: 1fr;
    height: 137px;
    margin: 15px 0 21px 91px;
}

.checks label {
    display: flex;
    align-items: center;
    gap: 3px;
}

.checks .off {
    color: #a8a6ac;
}

.checks input {
    appearance: none;
    width: 13px;
    height: 13px;
    border: 1px solid #1c4c80;
    background: linear-gradient(135deg, #dcdcd8, #fff);
}

.checks input:disabled {
    border-color: #c8c6cc;
    background: #fff;
}

.checks input:checked::after {
    content: "";
    display: block;
    width: 3px;
    height: 6px;
    margin: 0 0 0 4px;
    border: solid #21a121;
    border-width: 0 2px 2px 0;
    transform: rotate(40deg);
}

.actions {
    display: flex;
    gap: 8px;
    margin-left: -10px;
}

.actions button {
    width: 75px;
    height: 22px;
    border: 1px solid #2c4c84;
    border-radius: 2px;
    background: linear-gradient(#fff, #eef2f6 45%, #a8bcd0);
}

.actions .default {
    margin-left: auto;
    box-shadow: inset 0 0 0 2px #84a8e4;
}

/* Taskbar */
.taskbar {
    flex: none;
    height: 30px;
    display: flex;
    color: #fff;
    font-size: 11px;
    background: linear-gradient(#2858b4 0, #78ace8 2px, #4884d8 7px, #3068cc 15px, #2c60c4 25px, #2450a8);
}

.start {
    width: 88px;
    display: flex;
    align-items: center;
    padding-left: 10px;
    border-radius: 0 8px 8px 0;
    background: linear-gradient(#307c30 0, #68c468 3px, #34a034 9px, #30a830 18px, #38c038 26px, #288c28);
    box-shadow: inset -3px 0 3px #206820;
    font: italic bold 16px/20px "Open Sans", sans-serif;
    text-shadow: 1px 1px 1px #1c4c1c;
}

.start svg {
    width: 15px;
    height: 15px;
}

.quick {
    width: 103px;
    display: flex;
    align-items: center;
    gap: 7px;
    padding-left: 11px;
}

.quick svg, .tasks svg, .tray svg {
    width: 16px;
    height: 16px;
}

.quick span {
    align-self: start;
    padding: 2px 0 0 4px;
    font: bold 13px/14px var(--ui);
}

.tasks {
    flex: 1;
    min-width: 0;
    display: flex;
    gap: 2px;
    padding: 4px 0 2px;
}

.tasks button {
    flex: 1;
    min-width: 0;
    max-width: 109px;
    display: flex;
    align-items: center;
    gap: 3px;
    padding-left: 8px;
    border: 1px solid #2c60bc;
    border-radius: 3px;
    background: linear-gradient(#6ca4ec, #4888dc 5px, #3c78d4 15px, #3870cc);
    white-space: nowrap;
}

.tasks .current {
    background: linear-gradient(#142c60, #1c4080 6px, #2450a0);
    border-color: #142c60;
}

.tasks svg.more {
    width: 6px;
    height: 3px;
    margin: 0 4px 0 auto;
    fill: #fff;
}

.lang {
    width: 40px;
    padding: 8px 0 0 12px;
}

.tray {
    width: 147px;
    display: flex;
    align-items: center;
    gap: 2px;
    padding-top: 2px;
    color: #000;
    background: linear-gradient(#2858b4 0, #88b8ec 2px, #e0f0fe 7px, #fff 12px, #c8e0f8 20px, #6c9cd8);
}

/* The chevron straddles the tray's left edge */
.tray button {
    margin-left: -8px;
}

.tray time {
    margin-left: auto;
    padding-right: 13px;
}
```

FILE: script.js
```
const SVG = "http://www.w3.org/2000/svg";
const STEP = 8.583; // pixels per 5 mm

function add(svg, name, attrs, text) {
    const el = document.createElementNS(SVG, name);
    for (const key in attrs) el.setAttribute(key, attrs[key]);
    if (text !== undefined) el.textContent = text;
    svg.appendChild(el);
}

function drawHorizontalRuler() {
    const svg = document.getElementById("ruler-h");
    const width = svg.clientWidth, zero = 340;
    let d = "";
    for (let i = -40; zero + i * STEP < width; i++) {
        const x = Math.round(zero + i * STEP) + 0.5;
        d += `M${x} 19v${i % 10 ? -3 : -7}`;
        if (i % 10 === 0 && x < width - 60) {
            add(svg, "text", { x: x, y: 10 }, Math.abs(i * 5));
        }
    }
    add(svg, "path", { d: d, stroke: "#000" });
    add(svg, "path", { d: `M0 19.500H${width}`, stroke: "#000" });
    add(svg, "path", { d: "M251.500 2v17", stroke: "#000", "stroke-dasharray": "2 2" });
    add(svg, "text", { x: width - 5, y: 10, class: "unit-name" }, "millimeters");
}

function drawVerticalRuler() {
    const svg = document.getElementById("ruler-v");
    const height = svg.clientHeight, zero = 573;
    let d = "";
    for (let i = Math.ceil((zero - height) / STEP); zero - i * STEP > 0; i++) {
        const y = Math.round(zero - i * STEP) + 0.5;
        d += `M18 ${y}h${i % 10 ? -3 : -6}`;
        if (i % 10 === 0 && y < height - 50) {
            add(svg, "text", { transform: `translate(12 ${y}) rotate(-90)` }, Math.abs(i * 5));
        }
    }
    add(svg, "path", { d: d, stroke: "#000" });
    add(svg, "path", { d: "M0 14.500h18", stroke: "#000", "stroke-dasharray": "3 2" });
    add(svg, "text", { transform: `translate(12 ${height - 3}) rotate(-90)`, class: "unit-name" }, "millimeters");
}

// Last weeks of October, November and December, Monday first
const months = [
    [[21, 27], [28, 31], []],
    [[18, 24], [25, 30], []],
    [[16, 22], [23, 29], [30, 31]]
];

function drawCalendar() {
    const page = document.getElementById("page");
    months.forEach(weeks => {
        const table = document.createElement("table");
        weeks.forEach(([first, last]) => {
            const row = table.insertRow();
            for (let i = 0; i < 7; i++) {
                const cell = row.insertCell();
                if (first + i <= last) cell.textContent = first + i;
            }
        });
        page.appendChild(table);
    });
}

const colors = [
    "#000000", "#1a1a1a", "#333333", "#4d4d4d", "#666666", "#808080", "#999999", "#b3b3b3", "#cccccc", "#e6e6e6",
    "#ffffff", "#0000ff", "#00ffff", "#00ff00", "#ffff00", "#ff0000", "#ff00ff", "#9900cc", "#ff6600", "#ff99cc",
    "#663333", "#ccccff", "#9999ff", "#6699ff", "#6666ff", "#6666cc", "#003399", "#000066", "#336699", "#00ccff",
    "#99ffff", "#99cccc", "#669999", "#336666"
];

function drawPalette() {
    const box = document.getElementById("swatches");
    colors.forEach(color => {
        const swatch = document.createElement("button");
        swatch.style.background = color;
        swatch.setAttribute("aria-label", color);
        box.appendChild(swatch);
    });
}

drawHorizontalRuler();
drawVerticalRuler();
drawCalendar();
drawPalette();
```
